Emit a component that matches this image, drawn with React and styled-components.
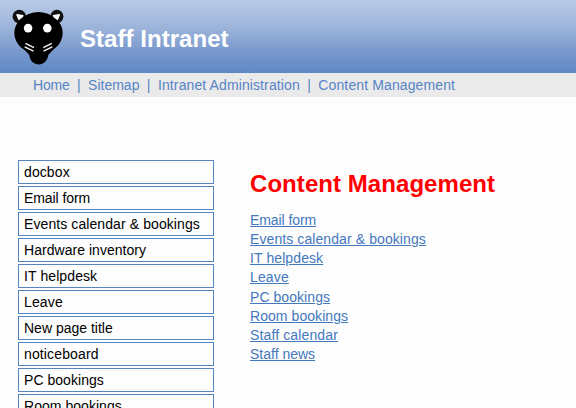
import React, { Fragment } from "react";
import styled, { createGlobalStyle } from "styled-components";

const GlobalStyle = createGlobalStyle`
  * { box-sizing: border-box; }
  html, body { margin: 0; padding: 0; }
  body {
    background: #fdfdfd;
    color: #000;
    font: 14px "Liberation Sans", Arial, sans-serif;
  }
`;

const Page = styled.div`
  width: 100%;
  height: 100vh;
  overflow: hidden;
`;

const Header = styled.header`
  display: flex;
  align-items: flex-start;
  height: 73px;
  padding-left: 10px;
  background: linear-gradient(#b9cbe5 0%, #9cb4da 38%, #7b9bce 68%, #5e88c4 100%);
`;

const Logo = styled.svg`
  display: block;
  flex: none;
  width: 58px;
  height: 73px;
`;

const SiteName = styled.h1`
  margin: 24px 0 0 12px;
  color: #fff;
  font-size: 24px;
  line-height: 30px;
  letter-spacing: 0.04px;
  white-space: nowrap;
`;

const TopNav = styled.nav`
  display: flex;
  height: 24px;
  padding-left: 33px;
  background: #eaeaea;
  color: #5684c6;
  line-height: 24px;
  white-space: nowrap;
`;

const TopLink = styled.a`
  letter-spacing: ${({ $tracking }) => $tracking}px;
`;

const Separator = styled.span`
  margin: 0 7.5px 0 7.4px;
`;

const Columns = styled.div`
  display: flex;
  align-items: flex-start;
  padding: 63px 0 0 18px;
`;

const Menu = styled.ul`
  display: grid;
  flex: none;
  gap: 2px;
  width: 196px;
  margin: 0;
  padding: 0;
  list-style: none;
`;

const MenuItem = styled.li`
  height: 24px;
  padding-left: 5px;
  border: 1px solid #5785c0;
  line-height: 22px;
  letter-spacing: ${({ $tracking }) => $tracking}px;
  white-space: nowrap;
`;

const Main = styled.main`
  margin-left: 36px;
  padding-top: 9px;
`;

const Title = styled.h2`
  margin: 0 0 11.85px;
  color: #f00;
  font-size: 24px;
  line-height: 30px;
  letter-spacing: 0.06px;
  white-space: nowrap;
`;

const PageList = styled.div`
  display: flex;
  flex-direction: column;
  align-items: flex-start;
  line-height: 19.2px;
`;

const PageLink = styled.a`
  color: #4378bd;
  letter-spacing: ${({ $tracking }) => $tracking}px;
  text-decoration: underline;
`;

const topLinks = [
  ["Home", -0.2],
  ["Sitemap", 0],
  ["Intranet Administration", 0.11],
  ["Content Management", 0.12],
];
const menuItems = [
  ["docbox", 0.1],
  ["Email form", -0.08],
  ["Events calendar & bookings", 0.09],
  ["Hardware inventory", 0.04],
  ["IT helpdesk", 0.1],
  ["Leave", 0.15],
  ["New page title", 0],
  ["noticeboard", 0.13],
  ["PC bookings", 0.04],
  ["Room bookings", 0.04],
];
const pages = [
  ["Email form", -0.08],
  ["Events calendar & bookings", 0.09],
  ["IT helpdesk", 0.1],
  ["Leave", 0.15],
  ["PC bookings", 0.06],
  ["Room bookings", 0.06],
  ["Staff calendar", 0.13],
  ["Staff news", 0],
];

function PantherLogo() {
  return (
    <Logo viewBox="10 0 58 73" aria-hidden="true">
      <ellipse cx="19.300" cy="16.500" rx="6.700" ry="6.800" fill="#111" />
      <ellipse cx="56.900" cy="16.500" rx="6.500" ry="6.800" fill="#111" />
      <ellipse cx="38.500" cy="33" rx="24.200" ry="20.900" />
      <path d="M20 45 29.300 55C30 61 34 64.500 38.800 64.500S47.500 61 48.300 55L57.500 45Z" />
      <path d="M17 14.800 22.800 15.800C22.500 17 20.500 18 18.900 19.300Z" fill="#fff" stroke="#fff" strokeWidth="1.500" strokeLinejoin="round" />
      <path d="M59.300 14.800 53.500 15.800C53.800 17 55.800 18 57.400 19.300Z" fill="#fff" stroke="#fff" strokeWidth="1.500" strokeLinejoin="round" />
      <circle cx="28.100" cy="28.100" r="4.300" fill="#fff" />
      <circle cx="47.300" cy="28.100" r="4.300" fill="#fff" />
      <path
        d="M25.500 43.300 34 47.600M24.700 46.800 33.500 51.200M51.800 43.300 43.300 47.600M52.300 46.800 43.500 51.200"
        fill="none" stroke="#f4f4f4" strokeWidth="1.400"
      />
    </Logo>
  );
}

export default function App() {
  return (
    <Page>
      <GlobalStyle />
      <Header>
        <PantherLogo />
        <SiteName>Staff Intranet</SiteName>
      </Header>
      <TopNav>
        {topLinks.map(([label, tracking], index) => (
          <Fragment key={label}>
            {index > 0 && <Separator>|</Separator>}
            <TopLink $tracking={tracking}>{label}</TopLink>
          </Fragment>
        ))}
      </TopNav>
      <Columns>
        <Menu>
          {menuItems.map(([label, tracking]) => (
            <MenuItem key={label} $tracking={tracking}>{label}</MenuItem>
          ))}
        </Menu>
        <Main>
          <Title>Content Management</Title>
          <PageList>
            {pages.map(([label, tracking]) => (
              <PageLink key={label} $tracking={tracking}>{label}</PageLink>
            ))}
          </PageList>
        </Main>
      </Columns>
    </Page>
  );
}
